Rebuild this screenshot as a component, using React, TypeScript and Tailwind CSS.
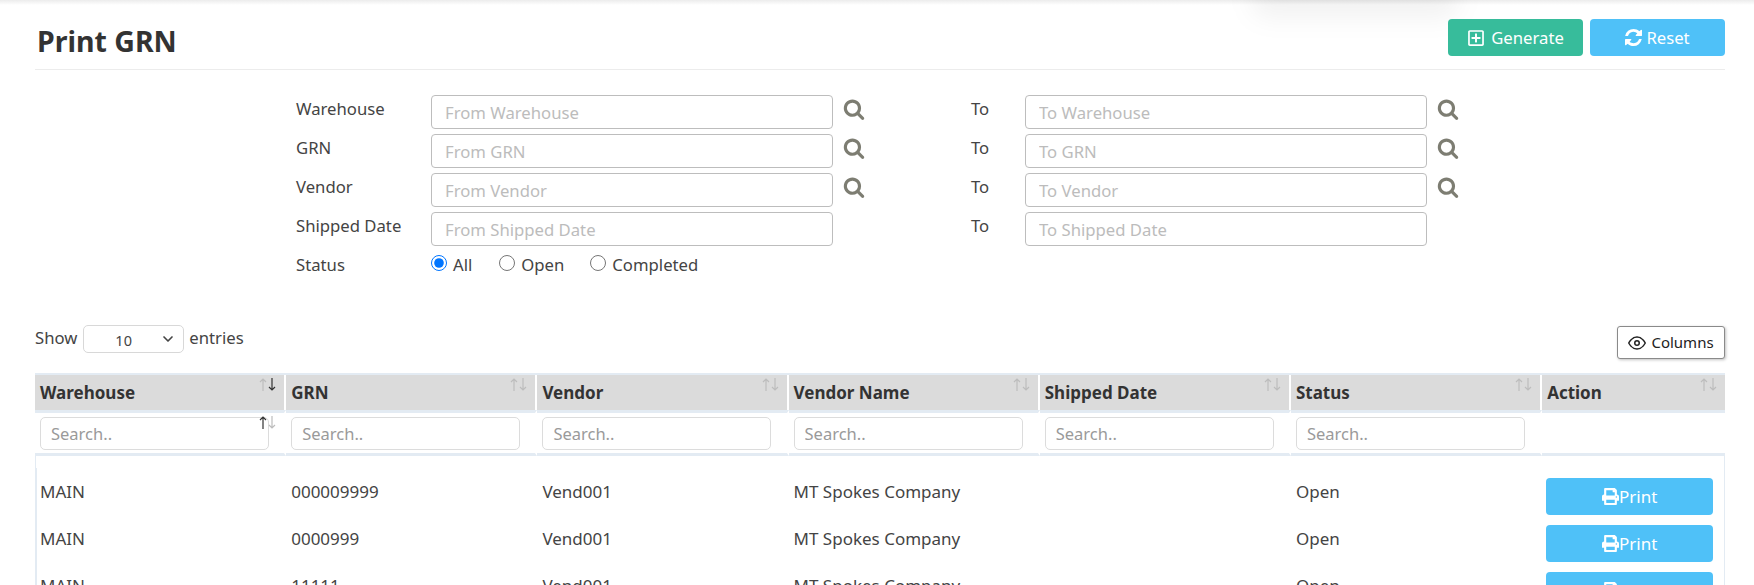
import { FaPrint, FaRegPlusSquare } from 'react-icons/fa';
import { FiEye } from 'react-icons/fi';
import { ChevronDown } from 'lucide-react';

const filters = [
  { label: 'Warehouse', lookup: true },
  { label: 'GRN', lookup: true },
  { label: 'Vendor', lookup: true },
  { label: 'Shipped Date', lookup: false },
];

const columns = ['Warehouse', 'GRN', 'Vendor', 'Vendor Name', 'Shipped Date', 'Status', 'Action'];

const rows = [{ grn: '000009999' }, { grn: '0000999' }, { grn: '11111' }];

function SearchIcon() {
  return (
    <svg viewBox="0 0 1792 1792" className="w-[22px] h-[22px] ml-[10px] mt-[3px] shrink-0 fill-[#7d7d72]">
      <path d="M1216 832q0-185-131.5-316.5t-316.5-131.5-316.5 131.5-131.5 316.5 131.5 316.5 316.5 131.5 316.5-131.5 131.5-316.5zm512 832q0 52-38 90t-90 38q-54 0-90-38l-343-342q-179 124-399 124-143 0-273.5-55.5t-225-150-150-225-55.5-273.5 55.5-273.5 150-225 225-150 273.5-55.5 273.5 55.5 225 150 150 225 55.5 273.5q0 220-124 399l343 343q37 37 37 90z" />
    </svg>
  );
}

function RefreshIcon() {
  return (
    <svg viewBox="0 0 1536 1536" className="w-[17px] h-[17px] fill-white">
      <path d="M1511 928q0 5-1 7-64 268-268 434.5t-478 166.5q-146 0-282.5-55t-243.5-157l-129 129q-19 19-45 19t-45-19-19-45v-448q0-26 19-45t45-19h448q26 0 45 19t19 45-19 45l-137 137q71 66 161 102t187 36q134 0 250-65t186-179q11-17 53-117 8-23 30-23h192q13 0 22.5 9.5t9.5 22.5zm25-800v448q0 26-19 45t-45 19h-448q-26 0-45-19t-19-45 19-45l138-138q-148-137-349-137-134 0-250 65t-186 179q-11 17-53 117-8 23-30 23h-199q-13 0-22.5-9.5t-9.5-22.5v-7q65-268 270-434.5t480-166.5q146 0 284 55.5t245 156.5l130-129q19-19 45-19t45 19 19 45z" />
    </svg>
  );
}

function SortArrows({ active }: { active?: 'up' | 'down' }) {
  return (
    <span className="absolute top-[3px] right-[8px] flex gap-[1px]">
      <svg viewBox="0 0 8 13" className={`w-[8px] h-[13px] fill-none stroke-[1.2] ${active === 'up' ? 'stroke-[#333]' : 'stroke-[#bdbdbd]'}`}>
        <path d="M4 13V1M1 4l3-3 3 3" />
      </svg>
      <svg viewBox="0 0 8 13" className={`w-[8px] h-[13px] fill-none stroke-[1.2] ${active === 'down' ? 'stroke-[#333]' : 'stroke-[#bdbdbd]'}`}>
        <path d="M4 0v12M1 9l3 3 3-3" />
      </svg>
    </span>
  );
}

function FilterInput({ placeholder, lookup }: { placeholder: string; lookup: boolean }) {
  return (
    <div className="flex items-start w-[436px]">
      <input
        placeholder={placeholder}
        className="w-[402px] h-[34px] border border-[#bdbdbd] rounded-[4px] pl-[13px] pr-2 text-[16.7px] outline-none placeholder:text-[#bcbcbc]"
      />
      {lookup && <SearchIcon />}
    </div>
  );
}

export default function App() {
  return (
    <div className="h-[585px] overflow-hidden bg-white text-[#444] font-['Noto_Sans','Open_Sans',sans-serif] text-[16.7px] relative">
      <div className="absolute top-0 left-0 right-0 h-[5px] bg-gradient-to-b from-[#ececec] to-white" />
      <div className="absolute -top-[22px] left-[1250px] w-[210px] h-[40px] rounded-full bg-black/5 blur-md" />

      <div className="ml-[35px] mr-[29px] relative">
        <div className="flex items-start justify-between h-[70px] border-b border-[#ececec] pt-[19px]">
          <h1 className="text-[28.5px] leading-[44px] font-bold text-[#333] ml-[2px]">Print GRN</h1>
          <div className="flex gap-[7px]">
            <button className="w-[135px] h-[37px] rounded-[4px] bg-[#37bc9b] text-white flex items-center justify-center gap-[6px]">
              <FaRegPlusSquare className="text-[18px]" />
              Generate
            </button>
            <button className="w-[135px] h-[37px] rounded-[4px] bg-[#4fc1f8] text-white flex items-center justify-center gap-[4px]">
              <RefreshIcon />
              Reset
            </button>
          </div>
        </div>

        <div className="ml-[261px] mt-[25px] flex flex-col gap-[5px]">
          {filters.map((f) => (
            <div key={f.label} className="flex items-start">
              <label className="w-[135px] leading-[28px]">{f.label}</label>
              <FilterInput placeholder={`From ${f.label}`} lookup={f.lookup} />
              <label className="leading-[28px] w-[54px] ml-[104px]">To</label>
              <FilterInput placeholder={`To ${f.label}`} lookup={f.lookup} />
            </div>
          ))}
          <div className="flex items-center h-[28px]">
            <label className="w-[135px]">Status</label>
            <label className="flex items-center gap-[6px] mr-[27px]">
              <input type="radio" name="status" defaultChecked className="w-[16px] h-[16px] accent-[#0075ff] -mt-[3px]" />
              All
            </label>
            <label className="flex items-center gap-[6px] mr-[26px]">
              <input type="radio" name="status" className="w-[16px] h-[16px] -mt-[3px]" />
              Open
            </label>
            <label className="flex items-center gap-[6px]">
              <input type="radio" name="status" className="w-[16px] h-[16px] -mt-[3px]" />
              Completed
            </label>
          </div>
        </div>

        <div className="flex items-start justify-between mt-[47px] h-[47px]">
          <div className="flex items-center gap-[5px] -mt-[3px]">
            <span>Show</span>
            <div className="w-[101px] h-[28px] ml-[1px] border border-[#d8d8d8] rounded-[5px] flex items-center justify-between pl-[31px] pr-[6px] mt-[2px]">
              <span className="text-[14.5px] mt-[4px]">10</span>
              <ChevronDown size={16} strokeWidth={2.5} className="mr-[1px]" />
            </div>
            <span>entries</span>
          </div>
          <button className="w-[108px] h-[33px] border border-[#8a8a8a] rounded-[3px] bg-white shadow-[1px_1px_3px_rgba(0,0,0,0.25)] flex items-center justify-center gap-[5px] text-[15px] text-[#222]">
            <FiEye className="text-[18px]" />
            Columns
          </button>
        </div>

        <table className="w-[1690px] table-fixed border-separate border-spacing-0 border-t-2 border-[#e3ebf3] text-[17px]">
          <thead>
            <tr>
              {columns.map((c, i) => (
                <th
                  key={c}
                  className={`relative h-[35px] bg-[#dbdbdb] text-left font-bold text-[#333] pl-[5px] ${i < 6 ? 'w-[251.2px] border-r-2 border-white' : 'w-[182.8px]'}`}
                >
                  {c}
                  <SortArrows active={i === 0 ? 'down' : undefined} />
                </th>
              ))}
            </tr>
            <tr>
              {columns.map((c, i) => (
                <td key={c} className={`relative h-[46px] border-y-[3px] border-[#e3ebf3] pl-[5px] align-middle ${i < 6 ? 'border-r-2 border-r-white' : ''}`}>
                  {i < 6 && (
                    <input
                      placeholder="Search.."
                      className="w-[229px] h-[33px] border border-[#dcdcdc] rounded-[5px] pl-[10px] text-[16.5px] outline-none placeholder:text-[#9a9a9a] block"
                    />
                  )}
                  {i === 0 && <SortArrows active="up" />}
                </td>
              ))}
            </tr>
          </thead>
          <tbody>
            <tr>
              <td colSpan={7} className="h-[12px] border-x border-[#e3ebf3]" />
            </tr>
            {rows.map((r) => (
              <tr key={r.grn}>
                <td className="h-[47px] pl-[3px] border-l-2 border-[#e3ebf3]">MAIN</td>
                <td className="pl-[5px]">{r.grn}</td>
                <td className="pl-[5px]">Vend001</td>
                <td className="pl-[5px]">MT Spokes Company</td>
                <td />
                <td className="pl-[5px]">Open</td>
                <td className="border-r border-[#e3ebf3] pl-[4px]">
                  <button className="w-[167px] h-[37px] mt-[10px] rounded-[4px] bg-[#4fc1f8] text-white flex items-center justify-center">
                    <FaPrint className="text-[17px]" />
                    Print
                  </button>
                </td>
              </tr>
            ))}
          </tbody>
        </table>
      </div>
    </div>
  );
}
